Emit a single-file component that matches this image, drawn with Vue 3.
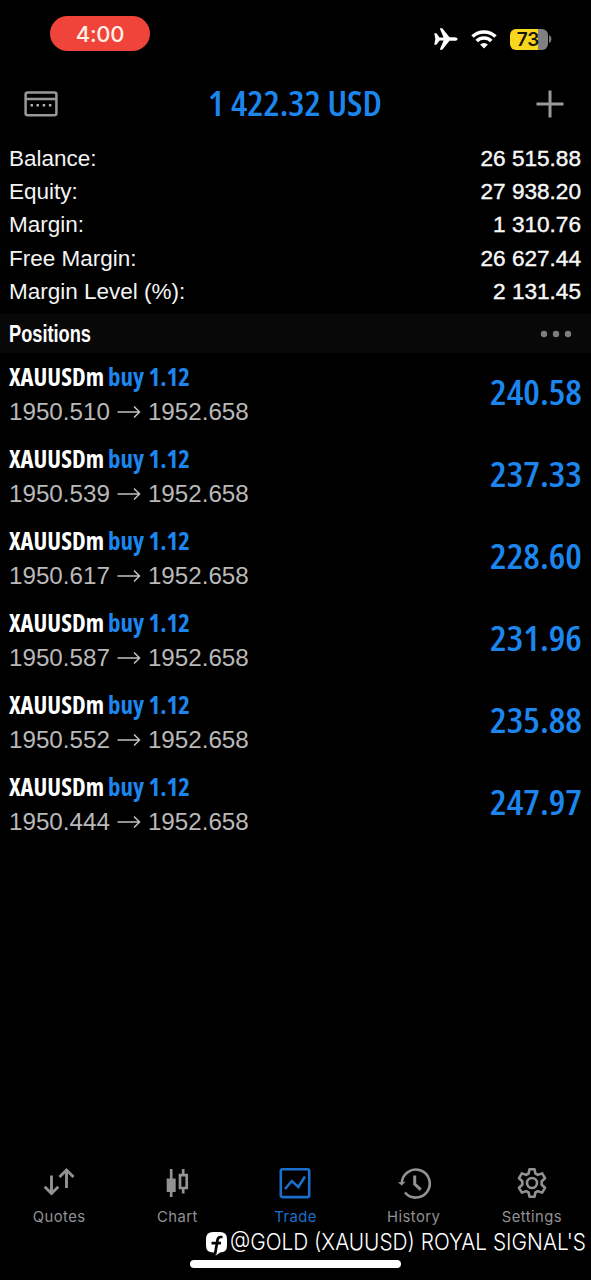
<script setup>
import { h } from 'vue'

// A single line of text condensed to an exact width.
const Fit = ({ text, width, height, base }) =>
  h('svg', { width, height, viewBox: `0 0 ${width} ${height}` }, [
    h('text', { x: 0, y: base, textLength: width, lengthAdjust: 'spacingAndGlyphs', fill: 'currentColor' }, text),
  ])
Fit.props = ['text', 'width', 'height', 'base']

const account = [
  ['Balance:', '26 515.88'],
  ['Equity:', '27 938.20'],
  ['Margin:', '1 310.76'],
  ['Free Margin:', '26 627.44'],
  ['Margin Level (%):', '2 131.45'],
]
const positions = [
  ['1950.510', '240.58'],
  ['1950.539', '237.33'],
  ['1950.617', '228.60'],
  ['1950.587', '231.96'],
  ['1950.552', '235.88'],
  ['1950.444', '247.97'],
]
</script>

<template>
  <div class="screen">
    <div class="status">
      <div class="clock">4:00</div>
      <div class="indicators">
        <svg class="plane" width="24" height="22" viewBox="0 0 24 22">
          <path fill="#fff" d="M.3 5.2h2.1l3.2 4.2h4L5.9.8Q5.8.3 6.4.3h1.9L15.5 9.2h5.1c1.8 0 3 .9 3 1.8s-1.2 1.8-3 1.8h-5.1L8.3 21.700H6.400q-.6 0-.5-.5l3.700-8.600h-4l-3.200 4.200H.3l1-5.800z" />
        </svg>
        <svg class="wifi" width="26" height="20" viewBox="0 0 26 20">
          <g fill="none" stroke="#fff" stroke-width="3.5">
            <path d="M1.500 7.600a16.400 16.400 0 0 1 23 0" />
            <path d="M5.700 12.100a10.400 10.400 0 0 1 14.600 0" />
          </g>
          <path fill="#fff" d="M13 19.500l-3.900-4a5.600 5.600 0 0 1 7.800 0z" />
        </svg>
        <div class="battery"><span>73</span></div>
        <svg class="nub" width="3" height="8" viewBox="0 0 3 8"><path d="M0 0Q2.500 1 2.500 4T0 8z" fill="#77777b" /></svg>
      </div>
    </div>

    <header>
      <svg width="34" height="26" viewBox="0 0 34 26">
        <g fill="none" stroke="#98989c" stroke-width="2.500">
          <rect x="1.600" y="1.600" width="30.800" height="22.600" rx="2" />
          <path d="M2 8h30" />
        </g>
        <g fill="#b4b4b6"><rect x="6.500" y="13" width="2.500" height="2.500" rx=".6" /><rect x="12.500" y="13" width="2.500" height="2.500" rx=".6" /><rect x="18.700" y="13" width="2.500" height="2.500" rx=".6" /><rect x="24.900" y="13" width="2.500" height="2.500" rx=".6" /></g>
      </svg>
      <Fit class="total" text="1 422.32 USD" :width="174" :height="40" :base="31.500" />
      <svg width="28" height="28" viewBox="0 0 28 28"><path d="M14 .5v27M.5 14h27" stroke="#99999b" stroke-width="3" /></svg>
    </header>

    <section class="account">
      <div v-for="[label, value] in account" :key="label" class="line">
        <span>{{ label }}</span><span class="value">{{ value }}</span>
      </div>
    </section>

    <div class="bar">
      <Fit class="bar-title" text="Positions" :width="82" :height="39" :base="28" />
      <svg width="32" height="8" viewBox="0 0 32 8" fill="#7d7d7f"><circle cx="4" cy="4" r="3.200" /><circle cx="16" cy="4" r="3.200" /><circle cx="28" cy="4" r="3.200" /></svg>
    </div>

    <section>
      <div v-for="[open, profit] in positions" :key="open" class="position">
        <div>
          <div class="symbol">
            <Fit text="XAUUSDm" :width="95" :height="34" :base="24.500" />
            <Fit class="blue" text="buy 1.12" :width="82" :height="34" :base="24.500" />
          </div>
          <div class="prices">
            <span>{{ open }}</span>
            <svg width="24" height="14" viewBox="0 0 24 14"><path d="M.5 7h22M17 1.500L22.500 7 17 12.500" fill="none" stroke="#c2c2c2" stroke-width="1.500" /></svg>
            <span>1952.658</span>
          </div>
        </div>
        <Fit class="profit" :text="profit" :width="92" :height="82" :base="52" />
      </div>
    </section>

    <footer>
      <nav>
        <div class="tab">
          <svg width="34" height="34" viewBox="0 0 34 34" fill="none" stroke="currentColor" stroke-width="2.900">
            <path d="M9.500 8.500v18M2.700 19.700l6.800 6.800 6.800-6.800M24.500 21V3M17.500 10l7-7 7 7" />
          </svg>
          <span>Quotes</span>
        </div>
        <div class="tab">
          <svg width="34" height="34" viewBox="0 0 34 34" fill="none" stroke="currentColor" stroke-width="2.700">
            <path d="M11.200 2v28M23.200 2v6M23.200 22v4.500" /><path d="M6.700 11.500h9v13.500h-9z" fill="currentColor" stroke="none" /><path d="M20 8.200h6.700v12.800H20z" />
          </svg>
          <span>Chart</span>
        </div>
        <div class="tab active">
          <svg width="34" height="34" viewBox="0 0 34 34" fill="none" stroke="currentColor" stroke-width="2.600">
            <rect x="2.800" y="2.300" width="28.400" height="27.800" rx="1.500" /><path d="M7 22l6.800-8 6.500 6L27 9.500" />
          </svg>
          <span>Trade</span>
        </div>
        <div class="tab">
          <svg width="34" height="34" viewBox="0 0 34 34" fill="none" stroke="currentColor" stroke-width="2.600">
            <path d="M4.800 16A14 14 0 1 1 8 25.500" /><path d="M17.700 8.500v8.700l6 5.500" stroke-width="3" /><path d="M.8 15.300l4 3.200 3.700-3.700z" fill="currentColor" stroke="none" />
          </svg>
          <span>History</span>
        </div>
        <div class="tab">
          <svg width="34" height="34" viewBox="0 0 34 34" fill="none" stroke="currentColor" stroke-width="2.600" stroke-linejoin="round">
            <path d="M14.500 2.200h5l.9 4.300 2.500 1.400 4.200-1.500 2.900 4.800-3.300 3.100v3.400l3.300 3.100-2.900 4.800-4.200-1.500-2.500 1.400-.9 4.300h-5l-.9-4.300-2.500-1.400-4.200 1.500L4 20.800l3.300-3.100v-3.400L4 11.200l2.900-4.800 4.200 1.500 2.500-1.400z" />
            <circle cx="17" cy="16" r="5" />
          </svg>
          <span>Settings</span>
        </div>
      </nav>
      <div class="credit">
        <svg width="21" height="24" viewBox="0 0 21 24">
          <path fill="#fff" d="M7 0h7q7 0 7 7v6.500q0 7-7 7l-4 3-2-3H7q-7 0-7-7V7Q0 0 7 0z" />
          <path fill="none" stroke="#000" stroke-width="2.700" d="M16.500 5h-1.800q-2.700 0-3.200 3L9 22.500M5.500 11.200h9.500" />
        </svg>
        <Fit class="handle" text="@GOLD (XAUUSD) ROYAL SIGNAL'S" :width="356" :height="30" :base="21.500" />
      </div>
      <div class="home"></div>
    </footer>
  </div>
</template>

<style>
html, body { margin: 0; background: #000; }
</style>

<style scoped>
.screen {
  width: 591px; height: 1280px; box-sizing: border-box; overflow: hidden;
  display: flex; flex-direction: column; background: #000; color: #fff;
  font-family: "Liberation Sans", Arial, sans-serif;
}
svg { display: block; flex: none; overflow: visible; }
.status { height: 72px; display: flex; justify-content: space-between; align-items: flex-start; padding: 16px 39px 0 50px; box-sizing: border-box; }
.clock {
  width: 100px; height: 35px; border-radius: 18px; background: #f0443a; color: #fff3e8;
  font: 500 22px/36px Inter, sans-serif; letter-spacing: -.3px; text-align: center;
}
.indicators { display: flex; align-items: center; height: 24px; margin-top: 11px; }
.wifi { margin-left: 13px; }
.battery {
  width: 38px; height: 21px; margin-left: 13px; border-radius: 6px;
  background: linear-gradient(90deg, #fad51e 28px, #808084 28px);
  color: #17160c; font: 600 19px/21px Inter, sans-serif; text-align: center;
}
.battery span { position: relative; left: -1px; }
.nub { margin-left: 1px; }
header { height: 64px; display: flex; align-items: center; justify-content: space-between; padding: 0 27px 0 24px; }
.total { margin-left: -4px; font: 640 33.500px "Open Sans", sans-serif; font-stretch: 80%; color: #1c86ee; }
.account { padding: 6px 10px 0 9px; height: 178px; box-sizing: border-box; }
.line { height: 33.350px; display: flex; justify-content: space-between; align-items: center; font-size: 22.600px; color: #f4f4f4; }
.line span:first-child { font-size: 22.500px; }
.value { -webkit-text-stroke: .4px #fff; }
.bar { height: 39px; display: flex; align-items: center; justify-content: space-between; padding: 0 19px 0 9px; background: #080808; }
.bar-title { font: 700 23px "Liberation Sans", sans-serif; }
.position { height: 82px; display: flex; justify-content: space-between; padding: 0 9px; }
.symbol { display: flex; gap: 4px; padding-top: 8px; font: 660 24.500px "Open Sans", sans-serif; font-stretch: 80%; }
.blue, .profit { color: #1c86ee; }
.profit { font: 640 33.500px "Open Sans", sans-serif; font-stretch: 80%; }
.prices { display: flex; align-items: center; height: 32px; margin-top: 1px; font-size: 24.200px; color: #b9b9b9; }
.prices svg { margin: 0 7px; }
footer { margin-top: auto; height: 118px; }
nav { display: flex; height: 66px; }
.tab { flex: 1; display: flex; flex-direction: column; align-items: center; color: #929294; font: 400 14.800px/18px Inter, sans-serif; letter-spacing: .45px; }
.tab svg { margin: 5px 0 7px; position: relative; left: -.2px; }
.active { color: #1b6fca; }
.credit { display: flex; align-items: flex-start; justify-content: flex-end; height: 32px; padding-right: 5px; }
.credit > svg:first-child { margin: 4px 3px 0 0; }
.handle { font: 350 23px Inter, sans-serif; }
.home { width: 211px; height: 8px; margin-left: 190px; border-radius: 4px; background: #fff; }
</style>
